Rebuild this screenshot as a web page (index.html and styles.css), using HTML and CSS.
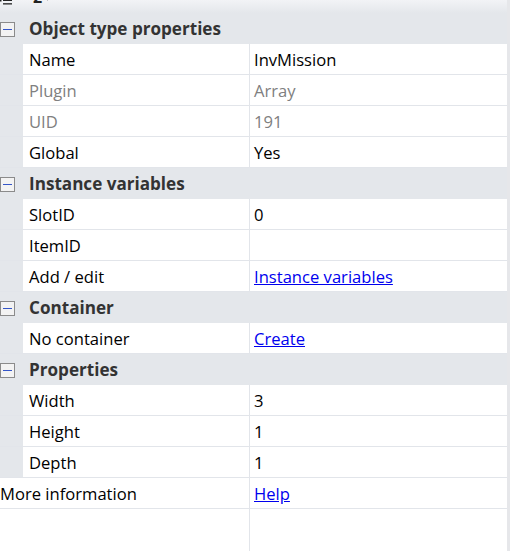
FILE: index.html
```html
<!DOCTYPE html>
<html>
<head>
<meta charset="utf-8">
<link rel="stylesheet" href="styles.css">
</head>
<body>
<div class="page">
  <div class="toolbar">
    <div class="tb-inner">
      <svg class="tb-list" width="14" height="14" viewBox="0 0 14 14">
        <rect x="0.5" y="3" width="2" height="2" fill="#222"/>
        <rect x="0.5" y="8.5" width="2" height="2" fill="#222"/>
        <rect x="4" y="3.5" width="9" height="1.3" fill="#222"/>
        <rect x="4" y="8.7" width="9" height="1.3" fill="#222"/>
        <rect x="4" y="12.2" width="9" height="1.3" fill="#222"/>
      </svg>
      <span class="tb-num">2</span>
      <svg class="tb-caret" width="11" height="7" viewBox="0 0 11 7">
        <path d="M0.5 0.5 L10.5 0.5 L5.5 6.5 Z" fill="#222"/>
      </svg>
    </div>
  </div>

  <div class="section">
    <div class="head"><span class="toggle"></span><span class="title">Object type properties</span></div>
    <div class="row"><div class="indent"></div><div class="name">Name</div><div class="value">InvMission</div></div>
    <div class="row muted"><div class="indent"></div><div class="name">Plugin</div><div class="value">Array</div></div>
    <div class="row muted"><div class="indent"></div><div class="name">UID</div><div class="value">191</div></div>
    <div class="row"><div class="indent"></div><div class="name">Global</div><div class="value">Yes</div></div>
  </div>

  <div class="section">
    <div class="head"><span class="toggle"></span><span class="title">Instance variables</span></div>
    <div class="row"><div class="indent"></div><div class="name">SlotID</div><div class="value">0</div></div>
    <div class="row"><div class="indent"></div><div class="name">ItemID</div><div class="value"></div></div>
    <div class="row"><div class="indent"></div><div class="name">Add / edit</div><div class="value"><a href="#">Instance variables</a></div></div>
  </div>

  <div class="section">
    <div class="head"><span class="toggle"></span><span class="title">Container</span></div>
    <div class="row"><div class="indent"></div><div class="name">No container</div><div class="value"><a href="#">Create</a></div></div>
  </div>

  <div class="section">
    <div class="head"><span class="toggle"></span><span class="title">Properties</span></div>
    <div class="row"><div class="indent"></div><div class="name">Width</div><div class="value">3</div></div>
    <div class="row"><div class="indent"></div><div class="name">Height</div><div class="value">1</div></div>
    <div class="row"><div class="indent"></div><div class="name">Depth</div><div class="value">1</div></div>
  </div>

  <div class="row top-level"><div class="name">More information</div><div class="value"><a href="#">Help</a></div></div>
  <div class="filler"><div class="name"></div><div class="value"></div></div>
</div>
</body>
</html>
```

FILE: styles.css
```css
html, body {
  margin: 0;
  padding: 0;
  height: 100%;
}
body {
  background: #e6e7ea;
  font-family: "Open Sans", "Noto Sans", sans-serif;
  font-size: 16.6px;
  color: #000;
}
.page {
  width: 507px;
  height: 551px;
  background: #fff;
  display: flex;
  flex-direction: column;
  overflow: hidden;
}
.toolbar {
  height: 13px;
  flex: none;
  background: linear-gradient(#f2f3f6, #e4e7eb);
  overflow: hidden;
  position: relative;
}
.tb-inner {
  display: flex;
  align-items: flex-end;
  height: 18px;
  margin-top: -13px;
}
.tb-list {
  margin-left: -1px;
  display: block;
}
.tb-num {
  margin-left: 20px;
  font-family: "Noto Sans", sans-serif;
  font-weight: bold;
  font-size: 16px;
  line-height: 16px;
  color: #222;
}
.tb-caret {
  margin-left: 0;
  margin-bottom: 4px;
  display: block;
}
.section {
  display: flex;
  flex-direction: column;
}
.head {
  height: 31px;
  background: #e4e7eb;
  display: flex;
  align-items: center;
}
.toggle {
  width: 13px;
  height: 13px;
  margin-left: 0;
  margin-top: 1px;
  border: 1px solid #8b8b8b;
  background: #f3f3f3;
  position: relative;
  box-sizing: content-box;
}
.toggle::after {
  content: "";
  position: absolute;
  left: 2px;
  right: 2px;
  top: 6px;
  height: 1px;
  background: #3556c8;
}
.title {
  margin-left: 14px;
  font-weight: bold;
  font-size: 17.1px;
  color: #333;
}
.row {
  display: flex;
  height: 30px;
  border-bottom: 1px solid #e2e5ea;
  align-items: stretch;
}
.indent {
  width: 23px;
  flex: none;
  background: #e4e7eb;
}
.name {
  width: 220px;
  flex: none;
  padding-left: 6px;
  padding-top: 1px;
  border-right: 1px solid #e2e5ea;
  display: flex;
  align-items: center;
  background: #fff;
}
.value {
  flex: 1;
  padding-left: 4px;
  padding-top: 1px;
  display: flex;
  align-items: center;
  background: #fff;
}
.muted .name, .muted .value {
  color: #808080;
}
.top-level .name {
  width: 249px;
  padding-left: 0;
}
.filler {
  flex: 1;
  display: flex;
}
.filler .name {
  width: 249px;
  padding-left: 0;
}
a {
  color: #0000ee;
  text-decoration: underline;
}
```
